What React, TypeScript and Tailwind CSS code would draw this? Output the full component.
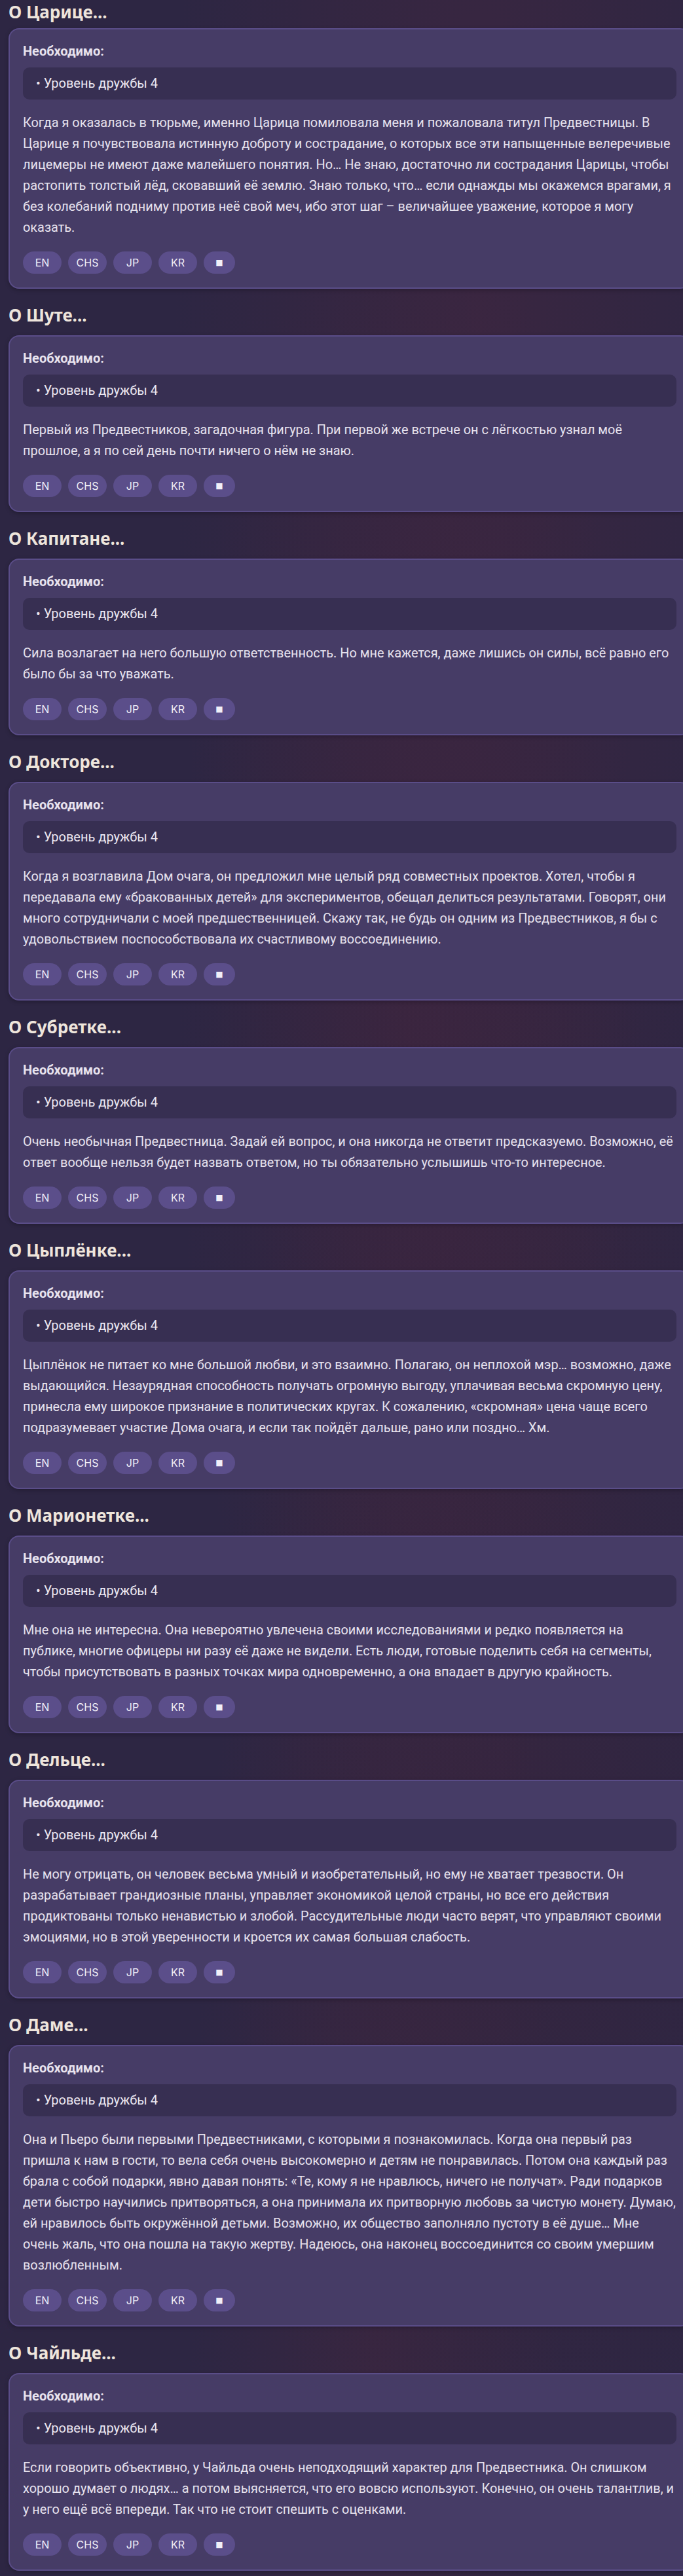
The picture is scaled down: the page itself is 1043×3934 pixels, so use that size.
import { JSX } from "react";

interface Story {
  title: string;
  text: string;
}

const stories: Story[] = [
  {
    title: "О Царице...",
    text: "Когда я оказалась в тюрьме, именно Царица помиловала меня и пожаловала титул Предвестницы. В Царице я почувствовала истинную доброту и сострадание, о которых все эти напыщенные велеречивые лицемеры не имеют даже малейшего понятия. Но… Не знаю, достаточно ли сострадания Царицы, чтобы растопить толстый лёд, сковавший её землю. Знаю только, что… если однажды мы окажемся врагами, я без колебаний подниму против неё свой меч, ибо этот шаг – величайшее уважение, которое я могу оказать.",
  },
  {
    title: "О Шуте...",
    text: "Первый из Предвестников, загадочная фигура. При первой же встрече он с лёгкостью узнал моё прошлое, а я по сей день почти ничего о нём не знаю.",
  },
  {
    title: "О Капитане...",
    text: "Сила возлагает на него большую ответственность. Но мне кажется, даже лишись он силы, всё равно его было бы за что уважать.",
  },
  {
    title: "О Докторе...",
    text: "Когда я возглавила Дом очага, он предложил мне целый ряд совместных проектов. Хотел, чтобы я передавала ему «бракованных детей» для экспериментов, обещал делиться результатами. Говорят, они много сотрудничали с моей предшественницей. Скажу так, не будь он одним из Предвестников, я бы с удовольствием поспособствовала их счастливому воссоединению.",
  },
  {
    title: "О Субретке...",
    text: "Очень необычная Предвестница. Задай ей вопрос, и она никогда не ответит предсказуемо. Возможно, её ответ вообще нельзя будет назвать ответом, но ты обязательно услышишь что-то интересное.",
  },
  {
    title: "О Цыплёнке...",
    text: "Цыплёнок не питает ко мне большой любви, и это взаимно. Полагаю, он неплохой мэр… возможно, даже выдающийся. Незаурядная способность получать огромную выгоду, уплачивая весьма скромную цену, принесла ему широкое признание в политических кругах. К сожалению, «скромная» цена чаще всего подразумевает участие Дома очага, и если так пойдёт дальше, рано или поздно… Хм.",
  },
  {
    title: "О Марионетке...",
    text: "Мне она не интересна. Она невероятно увлечена своими исследованиями и редко появляется на публике, многие офицеры ни разу её даже не видели. Есть люди, готовые поделить себя на сегменты, чтобы присутствовать в разных точках мира одновременно, а она впадает в другую крайность.",
  },
  {
    title: "О Дельце...",
    text: "Не могу отрицать, он человек весьма умный и изобретательный, но ему не хватает трезвости. Он разрабатывает грандиозные планы, управляет экономикой целой страны, но все его действия продиктованы только ненавистью и злобой. Рассудительные люди часто верят, что управляют своими эмоциями, но в этой уверенности и кроется их самая большая слабость.",
  },
  {
    title: "О Даме...",
    text: "Она и Пьеро были первыми Предвестниками, с которыми я познакомилась. Когда она первый раз пришла к нам в гости, то вела себя очень высокомерно и детям не понравилась. Потом она каждый раз брала с собой подарки, явно давая понять: «Те, кому я не нравлюсь, ничего не получат». Ради подарков дети быстро научились притворяться, а она принимала их притворную любовь за чистую монету. Думаю, ей нравилось быть окружённой детьми. Возможно, их общество заполняло пустоту в её душе… Мне очень жаль, что она пошла на такую жертву. Надеюсь, она наконец воссоединится со своим умершим возлюбленным.",
  },
  {
    title: "О Чайльде...",
    text: "Если говорить объективно, у Чайльда очень неподходящий характер для Предвестника. Он слишком хорошо думает о людях… а потом выясняется, что его вовсю используют. Конечно, он очень талантлив, и у него ещё всё впереди. Так что не стоит спешить с оценками.",
  },
];

const langs = ["EN", "CHS", "JP", "KR"];

const StoryCard = ({ story, first }: { story: Story; first: boolean }): JSX.Element => {
  return (
    <section className={first ? "" : "mt-[24px]"}>
      <h2
        className={`font-['Noto_Sans',sans-serif] text-[26px] leading-[32px] font-bold text-[#eee5dc] ${
          first ? "mb-[9px] pt-[2px]" : "mb-[15px]"
        }`}
      >
        {story.title}
      </h2>
      <div className="w-[1042px] rounded-[16px] border-2 border-[#5a4d88] bg-[#463c66] px-[20px] pt-[20px] pb-[21px] shadow-[0_2px_6px_rgba(0,0,0,0.25)]">
        <div className="font-['Roboto',sans-serif] text-[20px] leading-[26px] font-bold text-[#e8e3ee]">
          Необходимо:
        </div>
        <div className="mt-[12px] rounded-[10px] bg-[#372f52] px-[20px] py-[12px] font-['Roboto',sans-serif] text-[20px] leading-[25px] text-[#ebe7f1]">
          • Уровень дружбы 4
        </div>
        <p className="mt-[20px] font-['Roboto',sans-serif] text-[19.9px] leading-[32px] text-[#e6e2ee]">
          {story.text}
        </p>
        <div className="mt-[20px] flex gap-[10px]">
          {langs.map((l) => (
            <button
              key={l}
              className="flex h-[34px] w-[59px] items-center justify-center rounded-full bg-[#5b4e8a] font-['Inter',sans-serif] text-[16px] text-[#f2eff8]"
            >
              {l}
            </button>
          ))}
          <button className="flex h-[34px] w-[48px] items-center justify-center rounded-full bg-[#5b4e8a] font-['DejaVu_Sans',sans-serif] text-[12px] text-[#f2eff8]">
            ■
          </button>
        </div>
      </div>
    </section>
  );
};

const App = (): JSX.Element => {
  return (
    <div className="min-h-[3934px] w-full overflow-hidden bg-[#2d2643] bg-[radial-gradient(ellipse_at_70%_12%,rgba(70,38,62,0.5),transparent_45%),radial-gradient(ellipse_at_60%_40%,rgba(66,36,60,0.45),transparent_40%),radial-gradient(ellipse_at_75%_68%,rgba(64,36,58,0.4),transparent_40%),radial-gradient(ellipse_at_55%_92%,rgba(68,38,62,0.45),transparent_35%)]">
      <div className="pl-[13px] pt-0 pb-[20px]">
        {stories.map((s, i) => (
          <StoryCard key={s.title} story={s} first={i === 0} />
        ))}
      </div>
    </div>
  );
};

export default App;
